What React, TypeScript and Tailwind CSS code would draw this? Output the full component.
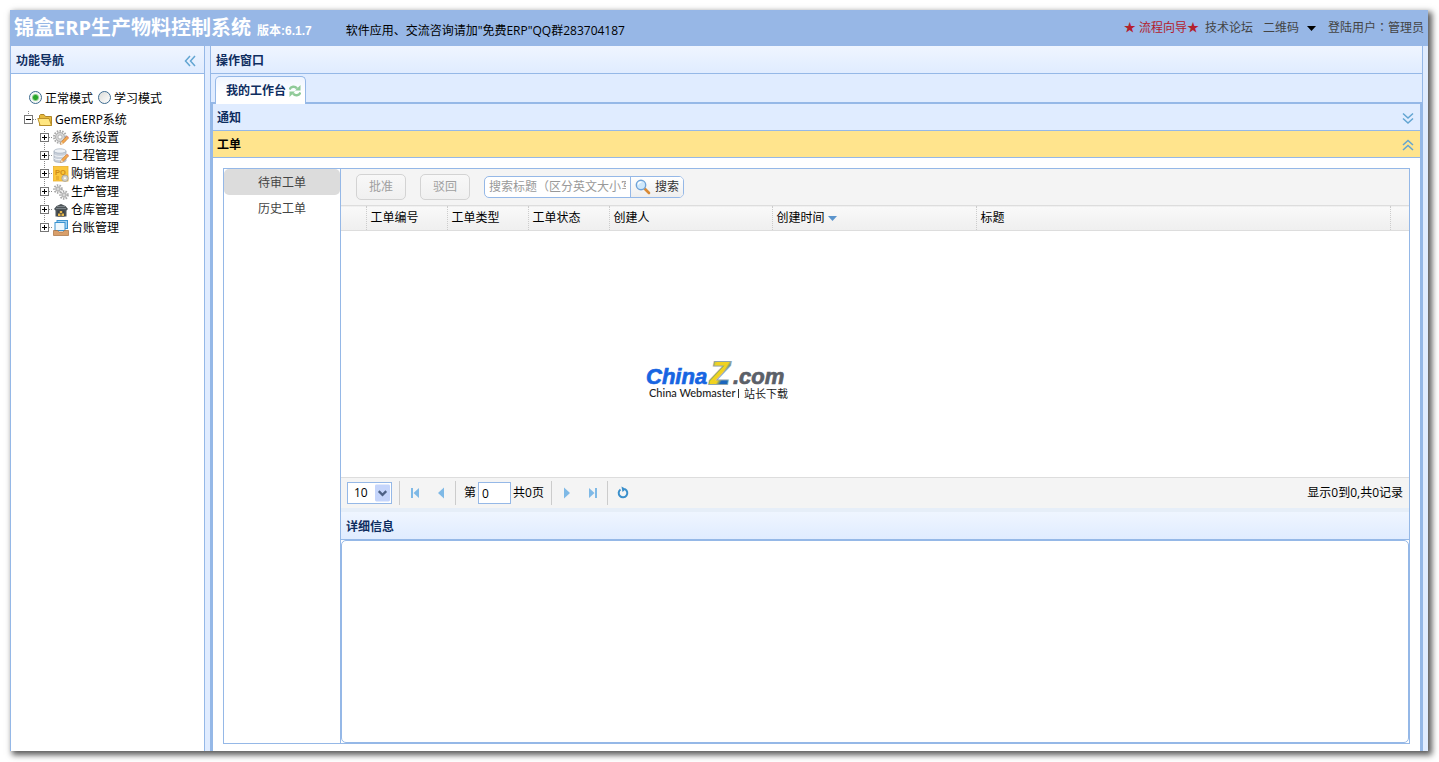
import { useState } from 'react'
import type { ReactNode } from 'react'

type Direction = 'left' | 'down' | 'up'

const chevrons: Record<Direction, string> = {
  left: 'M8 3 L3.5 8 L8 13 M13 3 L8.5 8 L13 13',
  down: 'M3 3.5 L8 8 L13 3.5 M3 8.5 L8 13 L13 8.5',
  up: 'M3 8 L8 3.5 L13 8 M3 13 L8 8.5 L13 13',
}

function DoubleChevron({ to }: { to: Direction }) {
  return (
    <svg viewBox="0 0 16 16" className="h-4 w-4" fill="none" stroke="#62a5d2" strokeWidth="1.5">
      <path d={chevrons[to]} />
    </svg>
  )
}

// Dotted connector with the expand box of a tree node
function TreeHit({ open, line }: { open?: boolean; line: 'root' | 'middle' | 'last' }) {
  return (
    <svg viewBox="0 0 18 18" className="h-[18px] w-[18px] shrink-0" shapeRendering="crispEdges" fill="none">
      <path
        d={line === 'middle' ? 'M9.5 0 V18' : 'M9.5 0 V9'}
        stroke="#888"
        strokeDasharray="1 1"
      />
      <path d="M14 8.5 H18" stroke="#888" strokeDasharray="1 1" />
      <rect x="5.5" y="4.5" width="8" height="8" fill="#fff" stroke="#777" />
      <path d="M7 8.5 H12" stroke="#000" />
      {!open && <path d="M9.5 6 V11" stroke="#000" />}
    </svg>
  )
}

function Gear({ x, y, r }: { x: number; y: number; r: number }) {
  return (
    <g>
      <circle cx={x} cy={y} r={r} fill="none" stroke="#a9a9a9" strokeWidth="2" strokeDasharray="1.5 1.2" />
      <circle cx={x} cy={y} r={r - 1.5} fill="#d6d6d6" stroke="#a0a0a0" strokeWidth="0.8" />
      <circle cx={x} cy={y} r={r / 3} fill="#fff" stroke="#9a9a9a" strokeWidth="0.6" />
    </g>
  )
}

function Pencil() {
  return (
    <g>
      <path d="M7.5 14.5 L8.5 11.7 L13.5 6.5 L15.3 8.3 L10.2 13.5 Z" fill="#f4a84e" stroke="#c4762b" strokeWidth="0.6" />
      <path d="M13.5 6.5 L14.4 5.7 L16 7.4 L15.3 8.3 Z" fill="#e58f7d" />
      <path d="M7.5 14.5 L8.5 11.7 L10.2 13.5 Z" fill="#f7e2c0" />
    </g>
  )
}

const icons: Record<string, ReactNode> = {
  settings: (
    <>
      <Gear x={7} y={7} r={6} />
      <Pencil />
    </>
  ),
  project: (
    <>
      <path d="M1 3 V12.5 C1 15 13 15 13 12.5 V3" fill="#c9d0da" stroke="#98a3b3" strokeWidth="0.7" />
      <path d="M1 6.5 C1 9 13 9 13 6.5 M1 9.8 C1 12.3 13 12.3 13 9.8" fill="none" stroke="#f3f5f8" />
      <ellipse cx="7" cy="3" rx="6" ry="2.2" fill="#eef1f5" stroke="#a2adbb" strokeWidth="0.7" />
      <Pencil />
    </>
  ),
  purchase: (
    <>
      <rect x="0.5" y="0.5" width="14.5" height="14.5" fill="#fbc63c" stroke="#eab02c" strokeWidth="0.8" />
      <text x="2" y="8.5" fontSize="7.5" fontWeight="700" fontFamily="Liberation Sans, sans-serif" fill="#cf8d16">PO</text>
      <path d="M3 11 H6 M3 13 H6" stroke="#d99a20" />
      <circle cx="12" cy="12.3" r="3.2" fill="#d6d2c4" stroke="#999" strokeWidth="0.7" />
      <circle cx="12" cy="12.3" r="1" fill="#fff" />
    </>
  ),
  production: (
    <>
      <Gear x={5} y={5} r={3.8} />
      <Gear x={11} y={11} r={3.8} />
    </>
  ),
  warehouse: (
    <>
      <path d="M1 7 L3.5 4 L8 2 L12.5 4 L15 7 L13.5 8.5 V14.5 H2.5 V8.5 Z" fill="#4d5458" />
      <path d="M4 4.5 H12 M3 6.5 H13" stroke="#899195" strokeWidth="0.8" />
      <rect x="4.5" y="8.5" width="7" height="6" fill="#3b3f42" />
      <path d="M5 14 V11.5 H7.5 V14 Z M8.5 14 V11.5 H11 V14 Z M6.8 11 V9 H9.2 V11 Z" fill="#e9b94c" />
    </>
  ),
  ledger: (
    <>
      <rect x="4" y="0.5" width="10.5" height="8" fill="#9fd0f2" stroke="#3a93d0" />
      <rect x="2" y="2.5" width="10" height="8" fill="#eef7fd" stroke="#3a93d0" />
      <path d="M0.5 10.5 H4.5 L6 12 H10 L11.5 10.5 H15.5 V15.5 H0.5 Z" fill="#d99f6a" stroke="#a86f3f" strokeWidth="0.7" />
    </>
  ),
}

const treeItems = [
  { icon: 'settings', label: '系统设置' },
  { icon: 'project', label: '工程管理' },
  { icon: 'purchase', label: '购销管理' },
  { icon: 'production', label: '生产管理' },
  { icon: 'warehouse', label: '仓库管理' },
  { icon: 'ledger', label: '台账管理' },
]

const columns = [
  { label: '', width: 'w-[25px]' },
  { label: '工单编号', width: 'w-[81px]' },
  { label: '工单类型', width: 'w-[81px]' },
  { label: '工单状态', width: 'w-[81px]' },
  { label: '创建人', width: 'w-[163px]' },
  { label: '创建时间', width: 'w-[204px]', sorted: true },
  { label: '标题', width: '' },
]

const panelHead =
  'flex shrink-0 items-center border-b border-[#95b8e7] bg-gradient-to-b from-[#eff5ff] to-[#e0ecff] pt-0.5 font-bold text-[#0e2d5f]'

function TopBar() {
  return (
    <header className="flex h-9 shrink-0 items-center bg-[#97b7e6] pr-1 pl-1">
      <h1 className="text-[20px] leading-6 font-bold whitespace-nowrap text-white">锦盒ERP生产物料控制系统</h1>
      <span className="mt-1.5 ml-1.5 font-['Liberation_Sans','Noto_Sans_CJK_SC',sans-serif] font-bold whitespace-nowrap text-white">
        版本:6.1.7
      </span>
      <span className="mt-1.5 ml-[34px] whitespace-nowrap">软件应用、交流咨询请加"免费ERP"QQ群283704187</span>
      <nav className="ml-auto flex items-center whitespace-nowrap text-[#444]">
        <a href="#guide" className="mr-1.5 text-[#b3202c]">★ 流程向导★</a>
        <a href="#forum" className="mr-2.5">技术论坛</a>
        <button type="button" className="mr-3 flex items-center gap-2">
          二维码
          <svg viewBox="0 0 9 5" className="h-[5px] w-[9px]">
            <path d="M0 0 H9 L4.5 5 Z" fill="#000" />
          </svg>
        </button>
        <span className="font-['Open_Sans','Noto_Sans_CJK_TC',sans-serif]">登陆用户：管理员</span>
      </nav>
    </header>
  )
}

function Sidebar() {
  const [mode, setMode] = useState('normal')
  const radio =
    "mb-1 h-[13px] w-[13px] appearance-none rounded-full border border-[#3d6a8e] bg-gradient-to-br from-[#dcdcd8] to-white bg-clip-padding checked:bg-[radial-gradient(circle,#28a528_0_2px,#f4f7f4_4px)]"

  return (
    <aside className="flex w-[195px] shrink-0 flex-col border-x border-[#95b8e7] bg-white">
      <div className={`${panelHead} h-7 justify-between pr-1.5 pl-[5px]`}>
        <h2>功能导航</h2>
        <button type="button" aria-label="collapse"><DoubleChevron to="left" /></button>
      </div>
      <div className="flex items-center gap-[5px] pt-4 pl-[18px]">
        {[
          { id: 'normal', label: '正常模式' },
          { id: 'study', label: '学习模式' },
        ].map(({ id, label }) => (
          <label key={id} className="flex items-center gap-[3px] leading-[18px]">
            <input
              type="radio"
              name="mode"
              checked={mode === id}
              onChange={() => setMode(id)}
              className={radio}
            />
            {label}
          </label>
        ))}
      </div>
      <ul className="mt-[3px] pl-2 leading-[18px]">
        <li>
          <div className="flex h-[18px] items-center">
            <TreeHit open line="root" />
            <svg viewBox="0 0 16 16" className="mr-0.5 h-4 w-4">
              <path d="M2.5 13.5 V3.5 L3.5 2.5 H7 L8.5 4.5 H14.5 V13.5 Z" fill="#e6b93d" stroke="#a77d1c" strokeWidth="0.9" />
              <path d="M0.8 6.5 H12 L14.5 13.5 H3.2 Z" fill="#ffe680" stroke="#b58a24" strokeWidth="0.9" />
            </svg>
            GemERP系统
          </div>
          <ul className="pl-4">
            {treeItems.map(({ icon, label }, i) => (
              <li key={label} className="flex h-[18px] items-center">
                <TreeHit line={i === treeItems.length - 1 ? 'last' : 'middle'} />
                <svg viewBox="0 0 16 16" className="mr-0.5 h-4 w-4">{icons[icon]}</svg>
                {label}
              </li>
            ))}
          </ul>
        </li>
      </ul>
    </aside>
  )
}

function Toolbar() {
  return (
    <div className="flex h-9 shrink-0 items-center bg-[#f4f4f4] pl-[15px]">
      {['批准', '驳回'].map((label) => (
        <button
          key={label}
          type="button"
          disabled
          className="mr-3.5 h-[26px] w-[50px] rounded-[5px] border border-[#d3d3d3] bg-gradient-to-b from-[#f8f8f8] to-[#f0f0f0] text-[#a0a0a0]"
        >
          {label}
        </button>
      ))}
      <div className="flex h-[22px] w-[200px] overflow-hidden rounded-[5px] border border-[#95b8e7] bg-white">
        <input
          type="text"
          aria-label="搜索标题"
          placeholder="搜索标题（区分英文大小写）"
          className="min-w-0 flex-1 px-1 outline-none placeholder:text-[#999]"
        />
        <button type="button" className="flex w-[53px] items-center gap-1 border-l border-[#95b8e7] bg-gradient-to-b from-white to-[#eee] pl-1 text-[#333]">
          <svg viewBox="0 0 16 16" className="h-4 w-4 shrink-0">
            <path d="M9.5 9.5 L14 14" stroke="#d98a35" strokeWidth="2.6" strokeLinecap="round" />
            <circle cx="6" cy="6" r="4.7" fill="#cfe8fb" stroke="#6fa3d8" strokeWidth="1.4" />
            <path d="M3.2 5.5 C3.5 3.8 5 3 6.5 3.2" fill="none" stroke="#fff" strokeWidth="1.2" />
          </svg>
          <span className="whitespace-nowrap">搜索</span>
        </button>
      </div>
    </div>
  )
}

function PageButton({ label, children }: { label: string; children: ReactNode }) {
  return (
    <button type="button" aria-label={label} className="mx-[5px] h-4 w-4">
      <svg viewBox="0 0 16 16" className="h-4 w-4" fill="#7fb9e6">{children}</svg>
    </button>
  )
}

function Separator() {
  return <span className="h-6 w-px bg-[#ccc]" />
}

function Pagination() {
  return (
    <div className="flex h-[31px] shrink-0 items-center border-t border-[#ddd] bg-[#f4f4f4] pr-1.5 pl-1.5">
      <div className="relative mr-[7px] h-[22px] w-[45px]">
        <select aria-label="page size" className="h-full w-full appearance-none border border-[#95b8e7] bg-white pl-1.5 outline-none">
          <option>10</option>
          <option>20</option>
          <option>50</option>
        </select>
        <svg viewBox="0 0 16 18" className="pointer-events-none absolute top-0.5 right-0.5 h-[18px] w-[15px]">
          <rect width="16" height="18" rx="1.5" fill="#c5d5fb" />
          <path d="M4 7 L8 11 L12 7" fill="none" stroke="#4d6185" strokeWidth="2.4" />
        </svg>
      </div>
      <Separator />
      <span className="w-0.5" />
      <PageButton label="first"><path d="M4 3 H6 V13 H4 Z M12 3 V13 L6.5 8 Z" /></PageButton>
      <PageButton label="previous"><path d="M11 2.5 V13.5 L5 8 Z" /></PageButton>
      <span className="w-px" />
      <Separator />
      <label className="flex items-center gap-0.5 pl-2">
        第
        <input type="text" defaultValue="0" className="h-[22px] w-[33px] border border-[#95b8e7] bg-white px-[3px] outline-none" />
      </label>
      <span className="mr-[7px] ml-0.5">共0页</span>
      <Separator />
      <span className="w-0.5" />
      <PageButton label="next"><path d="M5 2.5 V13.5 L11 8 Z" /></PageButton>
      <PageButton label="last"><path d="M10 3 H12 V13 H10 Z M4 3 V13 L9.5 8 Z" /></PageButton>
      <span className="w-px" />
      <Separator />
      <span className="w-0.5" />
      <PageButton label="refresh">
        <path d="M10 4.2 A4.3 4.3 0 1 1 5.5 4.5" fill="none" stroke="#3a8fcb" strokeWidth="2" />
        <path d="M6.5 1.5 L11 4 L7.5 7 Z" fill="#3a8fcb" />
      </PageButton>
      <span className="ml-auto">显示0到0,共0记录</span>
    </div>
  )
}

function OrderTable() {
  return (
    <table className="w-full shrink-0 table-fixed border-collapse">
      <thead>
        <tr className="h-[25px] border-y border-[#ddd] bg-gradient-to-b from-[#f9f9f9] to-[#efefef] text-left">
          {columns.map(({ label, width, sorted }, i) => (
            <th key={i} className={`${width} border-r border-dotted border-r-[#ccc] pl-1 font-normal whitespace-nowrap`}>
              {label}
              {sorted && (
                <svg viewBox="0 0 9 5" className="ml-[3px] inline h-[5px] w-[9px]">
                  <path d="M0 0 H9 L4.5 5 Z" fill="#5b94cc" />
                </svg>
              )}
            </th>
          ))}
          <th className="w-[19px]" />
        </tr>
      </thead>
    </table>
  )
}

function Workbench() {
  return (
    <div className="flex min-h-0 flex-1 border border-[#95b8e7]">
      <ul className="w-[117px] shrink-0 border-r border-[#95b8e7] text-center leading-6 text-[#444]">
        <li className="rounded-[5px] bg-[#dcdcdc] pt-0.5">待审工单</li>
        <li className="pt-0.5">历史工单</li>
      </ul>
      <div className="flex min-w-0 flex-1 flex-col">
        <Toolbar />
        <OrderTable />
        <div className="min-h-0 flex-1" />
        <Pagination />
        <div className="h-1 shrink-0 bg-[#e6eef8]" />
        <div className={`${panelHead} h-[28px] pl-[5px]`}>
          <h3>详细信息</h3>
        </div>
        <div className="h-[203px] shrink-0 rounded-[5px] border border-[#95b8e7]" />
      </div>
    </div>
  )
}

function MainPanel() {
  return (
    <main className="flex min-w-0 flex-1 flex-col border-x border-[#95b8e7] bg-[#e0ecff]">
      <div className={`${panelHead} h-7 pl-[5px]`}>
        <h2>操作窗口</h2>
      </div>
      <div className="flex h-[30px] shrink-0 items-end border-b-2 border-[#95b8e7] pl-1">
        <button
          type="button"
          className="-mb-0.5 flex h-[28px] items-center gap-[3px] rounded-t-[5px] border border-b-0 border-[#95b8e7] bg-gradient-to-b from-[#eff5ff] to-white to-60% pr-1 pl-2.5 font-bold whitespace-nowrap text-[#0e2d5f]"
        >
          我的工作台
          <svg viewBox="0 0 12 12" className="h-3 w-3" fill="none" stroke="#8fca97" strokeWidth="2.4">
            <path d="M0.5 4.5 C2 1 6 1 8 3.5 M11.5 7.5 C10 11 6 11 4 8.5" />
            <path d="M11.5 0 V5.5 H6 Z M0.5 12 V6.5 H6 Z" fill="#8fca97" stroke="none" />
          </svg>
        </button>
      </div>
      <div className="flex min-h-0 flex-1 flex-col border-x-2 border-[#95b8e7] bg-white">
        <div className="flex h-[27px] shrink-0 items-center justify-between border-b border-[#95b8e7] bg-[#e0ecff] pt-0.5 pr-1 pl-1 font-bold text-[#0e2d5f]">
          <h3>通知</h3>
          <button type="button" aria-label="expand"><DoubleChevron to="down" /></button>
        </div>
        <div className="flex h-[27px] shrink-0 items-center justify-between border-b border-[#95b8e7] bg-[#ffe48d] pt-0.5 pr-1 pl-1 font-bold">
          <h3>工单</h3>
          <button type="button" aria-label="collapse"><DoubleChevron to="up" /></button>
        </div>
        <div className="flex min-h-0 flex-1 px-2.5 pt-2.5 pb-[7px]">
          <Workbench />
        </div>
      </div>
    </main>
  )
}

function Brand() {
  return (
    <div className="pointer-events-none absolute top-[360px] left-[646px]">
      <svg viewBox="0 0 146 42" className="h-[42px] w-[146px] overflow-visible">
        <defs>
          <linearGradient id="z" x1="0" y1="0" x2="1" y2="1">
            <stop offset="0.1" stopColor="#8fa4ad" />
            <stop offset="0.3" stopColor="#f0d220" />
            <stop offset="0.55" stopColor="#f0d220" />
            <stop offset="0.65" stopColor="#1c66bd" />
          </linearGradient>
        </defs>
        <g fontFamily="Liberation Sans, sans-serif" fontWeight="700" fontStyle="italic">
          <text x="0" y="24" fontSize="22" fill="#1765e2" stroke="#1765e2" strokeWidth="0.7">China</text>
          <text x="64" y="24" fontSize="32" fill="url(#z)" stroke="#8fa4ad" strokeWidth="2" paintOrder="stroke">Z</text>
          <text x="87" y="24" fontSize="22" fill="#5b6068" stroke="#5b6068" strokeWidth="0.7">.com</text>
        </g>
        <text x="3" y="37" fontSize="11" fontFamily="Lato, sans-serif" fontWeight="500" fill="#222">China Webmaster</text>
        <path d="M92.5 29 V38" stroke="#333" />
        <text x="98" y="38" fontSize="11" fontFamily="Noto Sans CJK SC, sans-serif" fill="#222">站长下载</text>
      </svg>
    </div>
  )
}

export default function App() {
  return (
    <div className="relative flex h-screen bg-white pt-2.5 pr-[11px] pb-[11px] pl-2.5 font-['Open_Sans','Noto_Sans_CJK_SC',sans-serif] text-xs text-black">
      <div className="flex min-w-0 flex-1 flex-col bg-[#e0ecff] shadow-[3px_3px_6px_1px_rgba(0,0,0,0.65)]">
        <TopBar />
        <div className="flex min-h-0 flex-1 gap-[5px] pr-[5px]">
          <Sidebar />
          <MainPanel />
        </div>
      </div>
      <Brand />
    </div>
  )
}
